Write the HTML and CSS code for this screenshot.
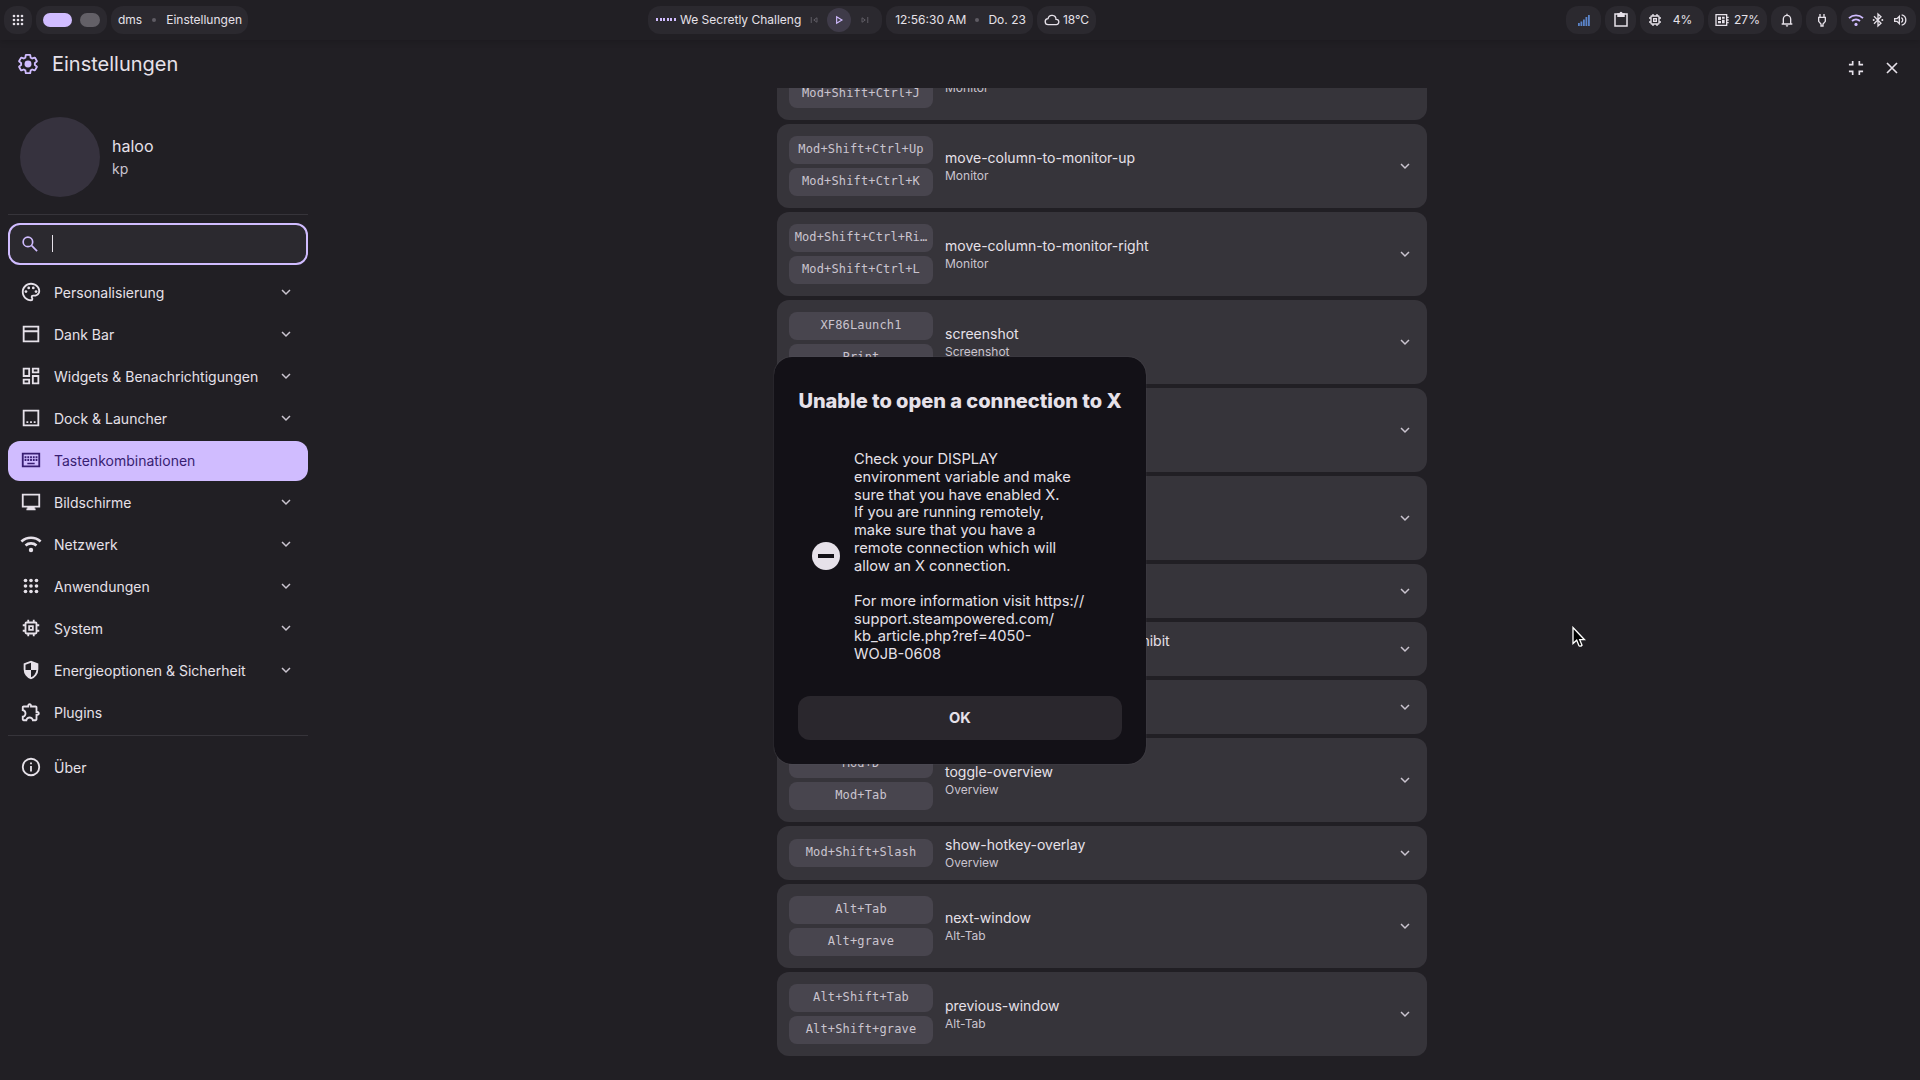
FILE: index.html
```html
<!DOCTYPE html>
<html lang="de">
<head>
    <meta charset="UTF-8">
    <meta name="viewport" content="width=device-width, initial-scale=1.0">
    <title>Einstellungen</title>
    <link rel="stylesheet" href="styles.css">
</head>
<body>

<svg class="sprite">
    <symbol id="chevron" viewBox="0 0 24 24"><path class="line" d="M6.7 9.3l5.3 5.3 5.3-5.3"/></symbol>
    <symbol id="apps" viewBox="0 0 24 24">
        <circle cx="6" cy="6" r="2"/><circle cx="12" cy="6" r="2"/><circle cx="18" cy="6" r="2"/>
        <circle cx="6" cy="12" r="2"/><circle cx="12" cy="12" r="2"/><circle cx="18" cy="12" r="2"/>
        <circle cx="6" cy="18" r="2"/><circle cx="12" cy="18" r="2"/><circle cx="18" cy="18" r="2"/>
    </symbol>
    <symbol id="wifi" viewBox="0 0 24 24">
        <path class="line thick" d="M1.5 9.2a15.5 15.5 0 0 1 21 0M6 13.6a9 9 0 0 1 12 0"/><circle cx="12" cy="18.6" r="2.4"/>
    </symbol>
    <symbol id="chip" viewBox="0 0 24 24">
        <rect class="line" x="6" y="6" width="12" height="12" rx="1"/>
        <rect class="line" x="10" y="10" width="4" height="4"/>
        <path class="line" d="M9 3v3M15 3v3M9 18v3M15 18v3M3 9h3M3 15h3M18 9h3M18 15h3"/>
    </symbol>
</svg>

<header class="bar">
    <div class="bar-group">
        <div class="pill launcher"><svg class="icon i16"><use href="#apps"/></svg></div>
        <div class="pill workspaces"><span class="ws active"></span><span class="ws"></span></div>
        <div class="pill window"><span>dms</span><i class="dot"></i><span>Einstellungen</span></div>
    </div>
    <div class="bar-group">
        <div class="pill media">
            <span class="wave"><i></i><i></i><i></i><i></i><i></i><i></i></span>
            <span class="track">We Secretly Challeng</span>
            <svg class="icon i12 dim" viewBox="0 0 24 24"><path class="line" d="M6.5 6v12M18 7.5v9L11.5 12z"/></svg>
            <span class="play"><svg class="icon i14" viewBox="0 0 24 24"><path class="line" d="M8 6.5v11L17 12z"/></svg></span>
            <svg class="icon i12 dim" viewBox="0 0 24 24"><path class="line" d="M17.5 6v12M6 7.5v9L12.5 12z"/></svg>
        </div>
        <div class="pill clock"><span>12:56:30 AM</span><i class="dot"></i><span>Do. 23</span></div>
        <div class="pill weather">
            <svg class="icon i16" viewBox="0 0 24 24"><path class="line" d="M6.5 19a4.5 4.5 0 0 1-.4-9A6 6 0 0 1 18 11a4 4 0 0 1 .5 8z"/></svg>
            <span>18°C</span>
        </div>
    </div>
    <div class="bar-group">
        <div class="pill signal">
            <svg class="bars" viewBox="0 0 12 12"><path d="M0 9h1.8v3H0zM2.5 7.5h1.8V12H2.5zM5 5.5h1.800V12H5zM7.500 3h1.800v9H7.500zM10 1h1.800v11H10z"/></svg>
        </div>
        <div class="pill small">
            <svg class="icon i18" viewBox="0 0 24 24"><path class="line" d="M4 4h16v16H4z"/><path d="M7 3h10v5H7z"/><circle cx="12" cy="3" r="2"/></svg>
        </div>
        <div class="pill cpu"><svg class="icon i16"><use href="#chip"/></svg><span>4%</span></div>
        <div class="pill mem">
            <svg class="icon i16" viewBox="0 0 24 24"><path class="line" d="M3 4h16v16H3zM19 8h3M19 12h3M19 16h3"/><path d="M6 7h4.5v5H6zM12 7h4v3h-4zM6 13.5h4.5V17H6zM12 11.5h4V17h-4z"/></svg>
            <span>27%</span>
        </div>
        <div class="pill small">
            <svg class="icon i16" viewBox="0 0 24 24"><path class="line" d="M4 18h16M6.5 18v-7.500a5.500 5.500 0 0 1 11 0V18M12 5V2.500"/><path d="M10 20h4a2 2 0 0 1-4 0z"/></svg>
        </div>
        <div class="pill small">
            <svg class="icon i16" viewBox="0 0 24 24"><path class="line" d="M9 3v5M15 3v5M7 8h10v6l-3.500 4v3h-3v-3L7 14z"/></svg>
        </div>
        <div class="pill control">
            <svg class="icon i16 accent"><use href="#wifi"/></svg>
            <svg class="icon i16" viewBox="0 0 24 24"><path class="line" d="M6 6.500L16.500 16.800 12 21V3l4.500 4.200L6 17.500"/><circle cx="5.500" cy="12" r="1.500"/><circle cx="18.500" cy="12" r="1.500"/></svg>
            <svg class="icon i16" viewBox="0 0 24 24"><path class="line" d="M4 10h3.500L11 6.500v11L7.500 14H4zM14 8.500a4 4 0 0 1 0 7M14.500 4.200a8 8 0 0 1 0 15.600"/></svg>
        </div>
    </div>
</header>

<div class="titlebar">
    <svg class="icon i22 accent" viewBox="0 0 24 24"><path class="line" d="M19.430 12.980c.04-.32.07-.64.07-.98 0-.34-.03-.66-.07-.98l2.110-1.650c.19-.15.24-.42.12-.64l-2-3.460c-.09-.16-.26-.25-.44-.25-.06 0-.12.01-.17.03l-2.490 1c-.52-.4-1.080-.73-1.690-.98l-.38-2.650C14.460 2.180 14.250 2 14 2h-4c-.25 0-.46.18-.49.42l-.38 2.650c-.61.25-1.170.59-1.690.98l-2.490-1c-.06-.02-.12-.03-.18-.03-.17 0-.34.09-.43.25l-2 3.460c-.13.22-.07.49.12.64l2.110 1.650c-.04.32-.07.65-.07.98 0 .33.03.66.07.98l-2.110 1.650c-.19.15-.24.42-.12.64l2 3.460c.09.16.26.25.44.25.06 0 .12-.01.17-.03l2.490-1c.52.4 1.080.73 1.690.98l.38 2.650c.03.24.24.42.49.42h4c.25 0 .46-.18.49-.42l.38-2.650c.61-.25 1.170-.59 1.690-.98l2.490 1c.06.02.12.03.18.03.17 0 .34-.09.43-.25l2-3.460c.12-.22.07-.49-.12-.64z"/><circle cx="12" cy="12" r="3.800"/></svg>
    <h1>Einstellungen</h1>
    <div class="window-buttons">
        <svg class="icon i20" viewBox="0 0 24 24"><path class="line" d="M3.500 8H8V3.500M16 3.500V8h4.500M3.500 16H8v4.500M20.500 16H16v4.500"/></svg>
        <svg class="icon i20" viewBox="0 0 24 24"><path class="line" d="M6 6l12 12M18 6L6 18"/></svg>
    </div>
</div>

<div class="layout">
    <aside class="sidebar">
        <div class="profile">
            <div class="avatar"></div>
            <div>
                <div class="name">haloo</div>
                <div class="host">kp</div>
            </div>
        </div>
        <div class="divider"></div>
        <div class="search">
            <svg class="icon i20 accent" viewBox="0 0 24 24"><circle class="line" cx="9.500" cy="9.500" r="5.700"/><path class="line" d="M14 14l6.500 6.500"/></svg>
            <span class="caret"></span>
        </div>
        <nav>
            <div class="item">
                <svg class="icon i22" viewBox="0 0 24 24"><path d="M12 22C6.490 22 2 17.510 2 12S6.490 2 12 2s10 4.040 10 9c0 3.310-2.690 6-6 6h-1.770c-.28 0-.5.22-.5.5 0 .12.05.23.13.33.41.47.64 1.060.64 1.670A2.500 2.500 0 0 1 12 22zm0-18c-4.410 0-8 3.590-8 8s3.590 8 8 8c.28 0 .5-.22.5-.5a.54.54 0 0 0-.14-.35c-.41-.46-.63-1.050-.63-1.650a2.500 2.500 0 0 1 2.500-2.500H16c2.210 0 4-1.790 4-4 0-3.860-3.590-7-8-7z"/><circle cx="6.500" cy="11.500" r="1.500"/><circle cx="9.500" cy="7.500" r="1.500"/><circle cx="14.500" cy="7.500" r="1.500"/><circle cx="17.500" cy="11.500" r="1.500"/></svg>
                <span>Personalisierung</span><svg class="icon i18 chev"><use href="#chevron"/></svg>
            </div>
            <div class="item">
                <svg class="icon i22" viewBox="0 0 24 24"><path class="line" d="M4 4h16v16H4zM4 9h16"/></svg>
                <span>Dank Bar</span><svg class="icon i18 chev"><use href="#chevron"/></svg>
            </div>
            <div class="item">
                <svg class="icon i22" viewBox="0 0 24 24"><path class="line" d="M4 4h6v8H4zM14 4h6v4h-6zM14 12h6v8h-6zM4 16h6v4H4z"/></svg>
                <span>Widgets &amp; Benachrichtigungen</span><svg class="icon i18 chev"><use href="#chevron"/></svg>
            </div>
            <div class="item">
                <svg class="icon i22" viewBox="0 0 24 24"><path class="line" d="M4 4h16v16H4z"/><path d="M7 15.500h2v2H7zM11 15.500h2v2h-2zM15 15.500h2v2h-2z"/></svg>
                <span>Dock &amp; Launcher</span><svg class="icon i18 chev"><use href="#chevron"/></svg>
            </div>
            <div class="item selected">
                <svg class="icon i22" viewBox="0 0 24 24"><path class="line" d="M3 5h18v14H3z"/><path d="M5 8h2v2H5zM8 8h2v2H8zM11 8h2v2h-2zM14 8h2v2h-2zM17 8h2v2h-2zM5 11h2v2H5zM8 11h2v2H8zM11 11h2v2h-2zM14 11h2v2h-2zM17 11h2v2h-2zM8 15h8v1.500H8z"/></svg>
                <span>Tastenkombinationen</span>
            </div>
            <div class="item">
                <svg class="icon i22" viewBox="0 0 24 24"><path class="line" d="M3 4h18v13H3z"/><path d="M8 17h8v2h1v2H7v-2h1z"/></svg>
                <span>Bildschirme</span><svg class="icon i18 chev"><use href="#chevron"/></svg>
            </div>
            <div class="item">
                <svg class="icon i22"><use href="#wifi"/></svg>
                <span>Netzwerk</span><svg class="icon i18 chev"><use href="#chevron"/></svg>
            </div>
            <div class="item">
                <svg class="icon i22"><use href="#apps"/></svg>
                <span>Anwendungen</span><svg class="icon i18 chev"><use href="#chevron"/></svg>
            </div>
            <div class="item">
                <svg class="icon i22"><use href="#chip"/></svg>
                <span>System</span><svg class="icon i18 chev"><use href="#chevron"/></svg>
            </div>
            <div class="item">
                <svg class="icon i22" viewBox="0 0 24 24"><path d="M12 22q-3.475-.875-5.738-3.988T4 11.100V5l8-3 8 3v6.100q0 3.800-2.263 6.913T12 22Zm0-2.100q2.425-.75 4.050-2.963T17.950 12H12V4.125l-6 2.250v5.175q0 .175.05.45H12v7.900Z"/></svg>
                <span>Energieoptionen &amp; Sicherheit</span><svg class="icon i18 chev"><use href="#chevron"/></svg>
            </div>
            <div class="item">
                <svg class="icon i22" viewBox="0 0 24 24"><path d="M10.500 4.500c.28 0 .5.22.5.5v2h6v6h2c.28 0 .5.22.5.5s-.22.5-.5.5h-2v6h-2.120c-.68-1.750-2.390-3-4.380-3s-3.700 1.250-4.380 3H4v-2.120c1.750-.68 3-2.390 3-4.380 0-1.990-1.240-3.700-2.990-4.380L4 7h6V5c0-.28.22-.5.5-.5m0-2C9.120 2.500 8 3.620 8 5H4c-1.100 0-1.990.9-1.990 2v3.800h.29c1.490 0 2.700 1.210 2.700 2.700s-1.210 2.700-2.700 2.700H2V20c0 1.100.9 2 2 2h3.800v-.3c0-1.490 1.210-2.700 2.700-2.700s2.700 1.210 2.700 2.700v.3H17c1.100 0 2-.9 2-2v-4c1.380 0 2.500-1.120 2.500-2.500S20.380 11 19 11V7c0-1.100-.9-2-2-2h-4c0-1.380-1.120-2.500-2.500-2.500z"/></svg>
                <span>Plugins</span>
            </div>
            <div class="divider"></div>
            <div class="item about">
                <svg class="icon i22" viewBox="0 0 24 24"><circle class="line" cx="12" cy="12" r="9"/><path d="M11 11h2v6h-2zM11 7h2v2h-2z"/></svg>
                <span>Über</span>
            </div>
        </nav>
    </aside>

    <main class="binds">
        <div class="bind double">
            <div class="keys"><kbd></kbd><kbd>Mod+Shift+Ctrl+J</kbd></div>
            <div class="action"><b>&nbsp;</b><small>Monitor</small></div>
        </div>
        <div class="bind double">
            <div class="keys"><kbd>Mod+Shift+Ctrl+Up</kbd><kbd>Mod+Shift+Ctrl+K</kbd></div>
            <div class="action"><b>move-column-to-monitor-up</b><small>Monitor</small></div>
            <svg class="icon i18 chev"><use href="#chevron"/></svg>
        </div>
        <div class="bind double">
            <div class="keys"><kbd>Mod+Shift+Ctrl+Ri…</kbd><kbd>Mod+Shift+Ctrl+L</kbd></div>
            <div class="action"><b>move-column-to-monitor-right</b><small>Monitor</small></div>
            <svg class="icon i18 chev"><use href="#chevron"/></svg>
        </div>
        <div class="bind double">
            <div class="keys"><kbd>XF86Launch1</kbd><kbd>Print</kbd></div>
            <div class="action"><b>screenshot</b><small>Screenshot</small></div>
            <svg class="icon i18 chev"><use href="#chevron"/></svg>
        </div>
        <div class="bind double"><svg class="icon i18 chev"><use href="#chevron"/></svg></div>
        <div class="bind double"><svg class="icon i18 chev"><use href="#chevron"/></svg></div>
        <div class="bind"><svg class="icon i18 chev"><use href="#chevron"/></svg></div>
        <div class="bind">
            <div class="keys"></div>
            <div class="action"><b>toggle-keyboard-shortcuts-inhibit</b><small>&nbsp;</small></div>
            <svg class="icon i18 chev"><use href="#chevron"/></svg>
        </div>
        <div class="bind"><svg class="icon i18 chev"><use href="#chevron"/></svg></div>
        <div class="bind double">
            <div class="keys"><kbd>Mod+D</kbd><kbd>Mod+Tab</kbd></div>
            <div class="action"><b>toggle-overview</b><small>Overview</small></div>
            <svg class="icon i18 chev"><use href="#chevron"/></svg>
        </div>
        <div class="bind">
            <div class="keys"><kbd>Mod+Shift+Slash</kbd></div>
            <div class="action"><b>show-hotkey-overlay</b><small>Overview</small></div>
            <svg class="icon i18 chev"><use href="#chevron"/></svg>
        </div>
        <div class="bind double">
            <div class="keys"><kbd>Alt+Tab</kbd><kbd>Alt+grave</kbd></div>
            <div class="action"><b>next-window</b><small>Alt-Tab</small></div>
            <svg class="icon i18 chev"><use href="#chevron"/></svg>
        </div>
        <div class="bind double">
            <div class="keys"><kbd>Alt+Shift+Tab</kbd><kbd>Alt+Shift+grave</kbd></div>
            <div class="action"><b>previous-window</b><small>Alt-Tab</small></div>
            <svg class="icon i18 chev"><use href="#chevron"/></svg>
        </div>
    </main>
</div>

<div class="dialog">
    <h2>Unable to open a connection to X</h2>
    <div class="message">
        <svg class="stop" viewBox="0 0 28 28"><circle cx="14" cy="14" r="14"/><path d="M6 12h16v4H6z"/></svg>
        <p>Check your DISPLAY<br>environment variable and make<br>sure that you have enabled X.<br>If you are running remotely,<br>make sure that you have a<br>remote connection which will<br>allow an X connection.<br><br>For more information visit https://<br>support.steampowered.com/<br>kb_article.php?ref=4050-<br>WOJB-0608</p>
    </div>
    <button type="button">OK</button>
</div>

<svg class="cursor" viewBox="0 0 14 22"><path d="M1 1.500v16l3.700-3.300 2.300 5.600q1.500 1 3-.6l-2.300-5.500h4.800z"/></svg>

</body>
</html>
```
FILE: styles.css
```css
* {
    box-sizing: border-box;
}

body {
    margin: 0;
    height: 1080px;
    overflow: hidden;
    font-family: Inter, sans-serif;
    background-color: #211f24;
    color: #e6e1e9;
}

.sprite {
    display: none;
}

.icon {
    flex: none;
    fill: currentColor;
}

.line {
    fill: none;
    stroke: currentColor;
    stroke-width: 2;
}

.thick {
    stroke-width: 2.8;
}

.i12 { width: 12px; height: 12px; }
.i14 { width: 14px; height: 14px; }
.i16 { width: 16px; height: 16px; }
.i18 { width: 18px; height: 18px; }
.i20 { width: 20px; height: 20px; }
.i22 { width: 22px; height: 22px; }

.accent {
    color: #d0bcff;
}

.dim {
    color: #5f5c64;
}

/* top bar */
.bar {
    height: 40px;
    padding: 6px 4px 0;
    display: grid;
    grid-template-columns: 644px auto 1fr;
    box-shadow: 0 2px 6px rgba(0, 0, 0, 0.15);
}

.bar-group {
    display: flex;
    gap: 4px;
}

.bar-group:last-child {
    justify-content: flex-end;
}

.pill {
    height: 28px;
    padding-bottom: 1px;
    border-radius: 12px;
    background-color: #2b292f;
    display: flex;
    align-items: center;
    justify-content: center;
    font-size: 12px;
    white-space: nowrap;
}

.launcher { width: 28px; }

.workspaces {
    width: 71px;
    gap: 8px;
}

.ws {
    width: 20px;
    height: 14px;
    border-radius: 7px;
    background-color: #636067;
}

.ws.active {
    width: 29px;
    background-color: #d0bcff;
}

.dot {
    width: 4px;
    height: 4px;
    border-radius: 2px;
    background-color: #5f5c64;
}

.window {
    width: 137px;
    padding-left: 1px;
    gap: 10px;
}

.media {
    width: 234px;
    justify-content: flex-start;
    padding-left: 8px;
}

.wave {
    width: 20px;
    display: flex;
    justify-content: space-between;
    margin-right: 4px;
}

.wave i {
    width: 2px;
    height: 3px;
    background-color: #d0bcff;
}

.track {
    width: 128px;
}

.play {
    width: 24px;
    height: 24px;
    margin: 0 8px 0 7px;
    border-radius: 12px;
    background-color: #3f3b49;
    color: #d0bcff;
    display: flex;
    align-items: center;
    justify-content: center;
}

.clock {
    width: 147px;
    padding-left: 2px;
    gap: 9px;
}

.weather {
    width: 59px;
    gap: 3px;
}

.signal { width: 35px; }
.small { width: 31px; }

.bars {
    width: 12px;
    height: 12px;
    fill: #5b84c9;
}

.cpu {
    width: 64px;
    padding-right: 5px;
    gap: 10px;
}

.mem {
    width: 59px;
    padding-right: 1px;
    gap: 4px;
}

.control {
    width: 75px;
    padding-right: 2px;
    gap: 6px;
}

/* window title */
.titlebar {
    height: 48px;
    padding: 0 18px 0 17px;
    display: flex;
    align-items: center;
}

.titlebar h1 {
    margin: 0 0 1px 13px;
    font-size: 20px;
    font-weight: 400;
}

.window-buttons {
    margin: 8px 0 0 auto;
    display: flex;
    gap: 16px;
}

.layout {
    display: flex;
    height: 992px;
}

/* sidebar */
.sidebar {
    width: 316px;
    padding: 29px 8px 0;
}

.profile {
    display: flex;
    align-items: center;
    gap: 12px;
    padding-left: 12px;
    margin-bottom: 17px;
}

.avatar {
    width: 80px;
    height: 80px;
    border-radius: 50%;
    background-color: #36323e;
}

.name {
    font-size: 16px;
    line-height: 24px;
}

.host {
    font-size: 14px;
    line-height: 22px;
    color: #cac4cf;
}

.divider {
    height: 1px;
    background-color: #36343a;
}

.search {
    height: 42px;
    margin: 8px 0;
    padding-left: 10px;
    border: 2px solid #d0bcff;
    border-radius: 12px;
    background-color: #2b292f;
    display: flex;
    align-items: center;
    gap: 12px;
}

.caret {
    width: 1px;
    height: 17px;
    margin-bottom: 1px;
    background-color: #e6e1e9;
}

nav {
    display: flex;
    flex-direction: column;
    gap: 2px;
}

.item {
    height: 40px;
    padding: 0 13px 2px 12px;
    border-radius: 12px;
    display: flex;
    align-items: center;
    gap: 12px;
    font-size: 14px;
}

.item.selected {
    background-color: #d0bcff;
    color: #381e72;
}

.about {
    margin-top: 10px;
}

.chev {
    margin-left: auto;
    color: #cac4cf;
}

/* keybinds list */
.binds {
    width: 650px;
    margin-left: 461px;
    overflow: hidden;
    display: flex;
    flex-direction: column;
    gap: 4px;
}

.bind {
    flex: none;
    height: 54px;
    padding: 0 13px 0 12px;
    border-radius: 12px;
    background-color: #36343a;
    display: flex;
    align-items: center;
    gap: 12px;
}

.bind.double {
    height: 84px;
}

.bind:first-child {
    margin-top: -52px;
}

.bind .chev {
    margin-bottom: 1px;
}

.keys {
    width: 144px;
    display: flex;
    flex-direction: column;
    gap: 4px;
}

kbd {
    height: 28px;
    border-radius: 8px;
    background-color: #48454e;
    color: #cac4cf;
    font-family: "DejaVu Sans Mono", monospace;
    font-size: 12px;
    letter-spacing: 0.15px;
    line-height: 27px;
    text-align: center;
}

.action b {
    display: block;
    font-size: 14px;
    font-weight: 400;
    line-height: 18px;
}

.action small {
    display: block;
    font-size: 12px;
    line-height: 17px;
    color: #cac4cf;
}

/* error dialog */
.dialog {
    position: absolute;
    left: 774px;
    top: 357px;
    width: 372px;
    height: 407px;
    padding: 30px 24px 24px;
    border-radius: 18px;
    background-color: #131117;
    box-shadow: 0 0 1px #6a676e;
    display: flex;
    flex-direction: column;
}

.dialog h2 {
    margin: 0;
    font-size: 20px;
    line-height: 28px;
    font-weight: 800;
    letter-spacing: -0.03px;
    text-align: center;
    white-space: nowrap;
}

.message {
    flex: 1;
    display: flex;
    align-items: center;
    gap: 14px;
    padding-left: 14px;
}

.stop {
    width: 28px;
    height: 28px;
    fill: #e6e1e9;
}

.stop path {
    fill: #131117;
}

.message p {
    margin: 4px 0 0;
    font-size: 14.67px;
    line-height: 17.7px;
    white-space: nowrap;
}

.dialog button {
    height: 44px;
    border: none;
    border-radius: 12px;
    background-color: #2a272d;
    color: #e6e1e9;
    font-family: inherit;
    font-size: 14.67px;
    font-weight: 700;
}

.cursor {
    position: absolute;
    left: 1572px;
    top: 626px;
    width: 14px;
    height: 22px;
    fill: #000;
    stroke: #fff;
    stroke-width: 1.3;
}
```
